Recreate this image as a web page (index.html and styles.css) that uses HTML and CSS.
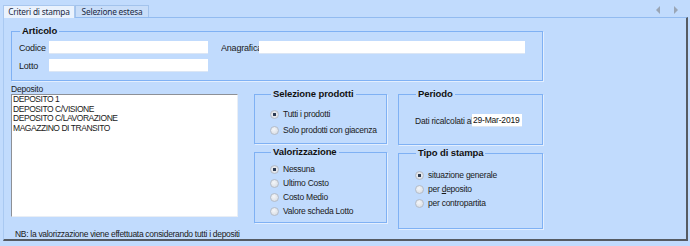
FILE: index.html
```html
<html>
<head>
    <title>Criteri di stampa</title>
    <meta charset="UTF-8">
    <link rel="stylesheet" href="styles.css">
</head>

<body>
    <div class="tabbar">
        <div class="tab tab-active">Criteri di stampa</div>
        <div class="tab">Selezione estesa</div>
        <svg class="tab-arrows" width="24" height="8" viewBox="0 0 24 8">
            <polygon points="4,0 4,8 0,4" fill="#9aa6b6"/>
            <polygon points="18,0 18,8 22,4" fill="#9aa6b6"/>
        </svg>
    </div>

    <div class="panel">
        <fieldset class="group group-articolo">
            <legend>Articolo</legend>
            <div class="row">
                <label class="lbl lbl-codice">Codice</label>
                <input class="field field-short" type="text">
                <label class="lbl lbl-anag">Anagrafica</label>
                <input class="field field-long" type="text">
            </div>
            <div class="row">
                <label class="lbl lbl-codice">Lotto</label>
                <input class="field field-short" type="text">
            </div>
        </fieldset>

        <div class="lower">
            <div class="col-left">
                <div class="small-label">Deposito</div>
                <div class="listbox">
                    <div class="list-item">DEPOSITO 1</div>
                    <div class="list-item">DEPOSITO C/VISIONE</div>
                    <div class="list-item">DEPOSITO C/LAVORAZIONE</div>
                    <div class="list-item">MAGAZZINO DI TRANSITO</div>
                </div>
                <div class="note">NB: la valorizzazione viene effettuata considerando tutti i depositi</div>
            </div>

            <div class="col-mid">
                <fieldset class="group group-prodotti">
                    <legend>Selezione prodotti</legend>
                    <label class="opt opt-tall"><input type="radio" name="prod" checked><span>Tutti i prodotti</span></label>
                    <label class="opt opt-tall"><input type="radio" name="prod"><span>Solo prodotti con giacenza</span></label>
                </fieldset>
                <fieldset class="group group-valor">
                    <legend>Valorizzazione</legend>
                    <label class="opt"><input type="radio" name="val" checked><span>Nessuna</span></label>
                    <label class="opt"><input type="radio" name="val"><span>Ultimo Costo</span></label>
                    <label class="opt"><input type="radio" name="val"><span>Costo Medio</span></label>
                    <label class="opt"><input type="radio" name="val"><span>Valore scheda Lotto</span></label>
                </fieldset>
            </div>

            <div class="col-right">
                <fieldset class="group group-periodo">
                    <legend>Periodo</legend>
                    <div class="row">
                        <label class="lbl lbl-dati">Dati ricalcolati al</label>
                        <input class="field field-date" type="text" value="29-Mar-2019">
                    </div>
                </fieldset>
                <fieldset class="group group-tipo">
                    <legend>Tipo di stampa</legend>
                    <label class="opt"><input type="radio" name="tipo" checked><span>situazione generale</span></label>
                    <label class="opt"><input type="radio" name="tipo"><span>per <u>d</u>eposito</span></label>
                    <label class="opt"><input type="radio" name="tipo"><span>per contropartita</span></label>
                </fieldset>
            </div>
        </div>
    </div>
</body>
</html>
```

FILE: styles.css
```css
/* Styles généraux */
body {
    margin: 0;
    width: 690px;
    height: 246px;
    overflow: hidden;
    background-color: #c1dbfd;
    font-family: "Liberation Sans", Arial, sans-serif;
    color: #1a1a1a;
}

/* Onglets */
.tabbar {
    display: flex;
    align-items: flex-end;
    height: 17px;
    padding-left: 3px;
    padding-right: 10px;
}

.tab {
    height: 11px;
    width: 72px;
    box-sizing: content-box;
    text-align: center;
    font-family: "Noto Sans", "Open Sans", sans-serif;
    font-size: 8.3px;
    letter-spacing: -0.2px;
    line-height: 11px;
    white-space: nowrap;
    color: #1c2a44;
    background-color: #c8ddf9;
    border: 1px solid #a3c3ec;
    border-bottom: none;
}

.tab-active {
    position: relative;
    z-index: 1;
    width: 70px;
    height: 12px;
    margin-bottom: -1px;
    background-color: #eaf2fd;
    border-color: #a9c7ee;
}

.tab-arrows {
    margin-left: auto;
    align-self: center;
    margin-top: 2px;
}

/* Panneau */
.panel {
    height: 224px;
    margin: 0 2px 0 3px;
    border-top: 1px solid #92bbf0;
    border-left: 1px solid #a9c9f2;
    border-right: 2px solid #555b63;
    border-bottom: 2px solid #555b63;
    padding: 7px 0 0 7px;
    box-sizing: border-box;
}

.group {
    margin: 0;
    padding: 0;
    border: 1px solid #7fb1f4;
    box-shadow: 1px 1px 0 #e3eefe;
    min-width: 0;
}

.group legend {
    margin-left: 1px;
    padding: 0 2px;
    font-size: 9.5px;
    font-weight: bold;
    letter-spacing: -0.1px;
    line-height: 12px;
    color: #111;
}

.group-articolo {
    width: 532px;
    box-sizing: border-box;
    padding: 4px 0 8px 7px;
}

.row {
    display: flex;
    align-items: center;
    height: 13px;
}

.row + .row {
    margin-top: 5px;
}

.lbl {
    flex-shrink: 0;
    font-size: 9px;
    letter-spacing: -0.2px;
    white-space: nowrap;
    overflow: hidden;
}

.lbl-codice {
    width: 30px;
}

.lbl-anag {
    width: 38px;
    margin-left: 13px;
}

.field {
    flex-shrink: 0;
    height: 13px;
    padding: 0 2px;
    border: none;
    border-bottom: 1px solid #dbe6f5;
    box-sizing: border-box;
    background-color: #fff;
    font-family: "Liberation Sans", Arial, sans-serif;
    font-size: 8.5px;
    letter-spacing: -0.2px;
    color: #111;
    outline: none;
}

.field-short {
    width: 159px;
}

.field-long {
    width: 266px;
}

/* Partie basse */
.lower {
    display: flex;
    align-items: flex-start;
    margin-top: 3px;
}

.col-left {
    width: 227px;
}

.small-label {
    font-size: 8.5px;
    letter-spacing: -0.2px;
    line-height: 10px;
}

.listbox {
    height: 123px;
    box-sizing: border-box;
    background-color: #fff;
    border-top: 1px solid #8d9096;
    border-left: 1px solid #8d9096;
    border-right: 1px solid #e9eef5;
    border-bottom: 1px solid #e9eef5;
    padding-left: 1px;
}

.list-item {
    font-size: 8.5px;
    letter-spacing: -0.45px;
    line-height: 9.7px;
}

.note {
    margin-top: 12px;
    padding-left: 4px;
    font-size: 8.5px;
    letter-spacing: -0.3px;
    line-height: 10px;
    white-space: nowrap;
}

.col-mid {
    width: 133px;
    margin-left: 16px;
    padding-top: 4px;
}

.col-right {
    width: 145px;
    margin-left: 11px;
    padding-top: 4px;
}

.col-mid .group,
.col-right .group {
    box-sizing: border-box;
    width: 100%;
}

.group-prodotti {
    padding: 7px 0 6px 15px;
}

.group-valor {
    margin-top: 2px !important;
    padding: 4px 0 4px 15px;
}

.group-periodo {
    padding: 14px 0 17px 16px;
}

.group-tipo {
    margin-top: 2px !important;
    padding: 9px 0 18px 16px;
}

.opt {
    display: flex;
    align-items: center;
    height: 14px;
    font-size: 8.5px;
    letter-spacing: -0.25px;
    white-space: nowrap;
}

.opt span {
    white-space: pre;
}

.opt-tall + .opt-tall {
    margin-top: 2px;
}

.opt input {
    flex-shrink: 0;
    -webkit-appearance: none;
    appearance: none;
    width: 9px;
    height: 9px;
    margin: 0 4px 0 0;
    border: 1px solid #b4bcc8;
    border-radius: 50%;
    background: radial-gradient(circle at 40% 35%, #f4f6f9, #d3d8df);
    box-sizing: border-box;
}

.opt input:checked {
    background: radial-gradient(circle, #2b3a52 0, #2b3a52 1.4px, #e6e9ee 1.9px, #d3d8df 100%);
}

.lbl-dati {
    width: 57px;
    font-size: 8.5px;
}

.field-date {
    width: 50px;
    padding: 0 1px;
}
```
